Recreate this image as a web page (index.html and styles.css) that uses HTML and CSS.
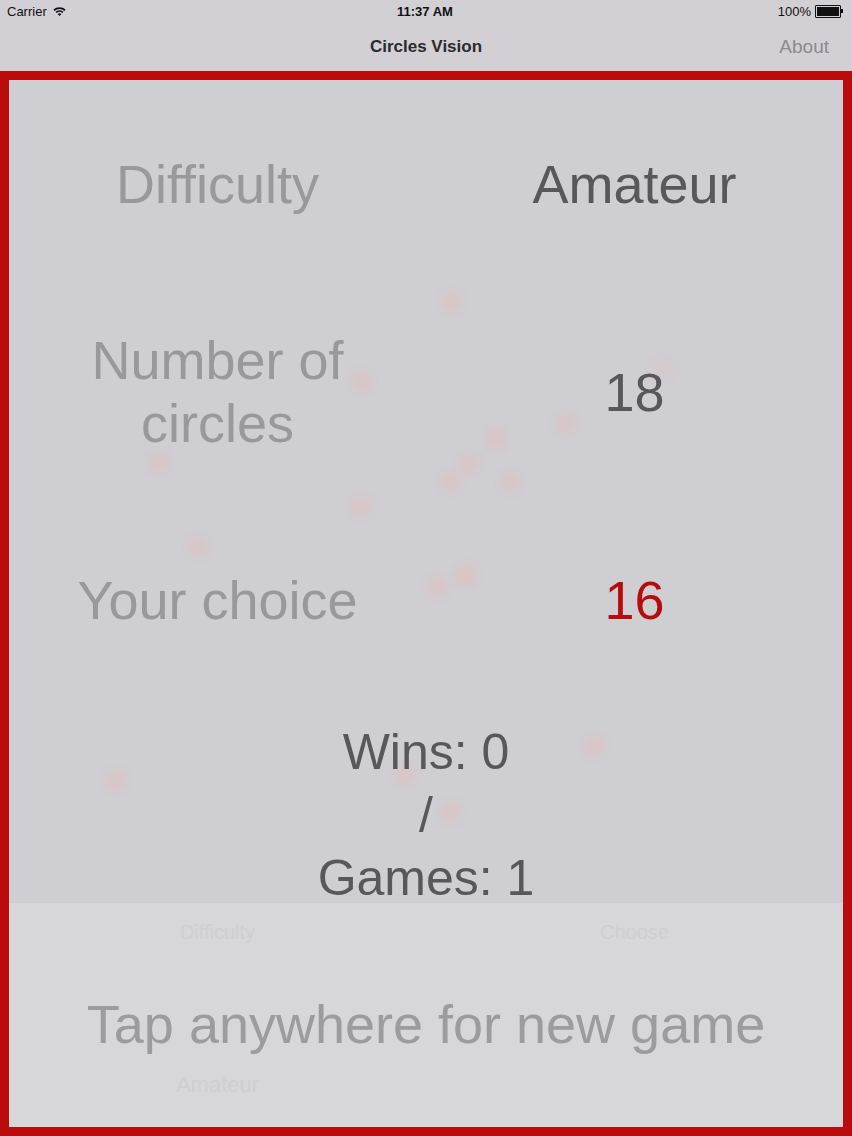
FILE: index.html
```html
<!DOCTYPE html>
<html lang="en">
<head>
<meta charset="utf-8">
<title>Circles Vision</title>
<link rel="stylesheet" href="styles.css">
</head>
<body>
<div class="status">
  <div class="status-left">
    <span>Carrier</span>
    <svg class="wifi" width="13" height="10" viewBox="0 0 13 10">
      <path d="M0.4 3.6 A9 9 0 0 1 12.6 3.6 L11.4 4.9 A7.2 7.2 0 0 0 1.6 4.9 Z" fill="#111"/>
      <path d="M2.5 5.8 A6 6 0 0 1 10.5 5.8 L9.3 7.1 A4.2 4.2 0 0 0 3.7 7.1 Z" fill="#111"/>
      <path d="M4.6 8 A3 3 0 0 1 8.4 8 L6.5 10 Z" fill="#111"/>
    </svg>
  </div>
  <div class="status-time">11:37 AM</div>
  <div class="status-right">
    <span>100%</span>
    <span class="battery"><span class="battery-fill"></span></span>
    <span class="battery-nub"></span>
  </div>
</div>
<div class="navbar">
  <div class="nav-side"></div>
  <div class="nav-title">Circles Vision</div>
  <div class="nav-side nav-action">About</div>
</div>
<div class="board">
  <div class="main">
    <div class="dots">
      <span class="dot" style="left:443px;top:222px"></span>
      <span class="dot" style="left:353px;top:302px"></span>
      <span class="dot" style="left:557px;top:344px"></span>
      <span class="dot" style="left:487px;top:359px"></span>
      <span class="dot" style="left:460px;top:384px"></span>
      <span class="dot" style="left:442px;top:402px"></span>
      <span class="dot" style="left:501px;top:402px"></span>
      <span class="dot" style="left:150px;top:383px"></span>
      <span class="dot" style="left:352px;top:427px"></span>
      <span class="dot" style="left:189px;top:467px"></span>
      <span class="dot" style="left:428px;top:507px"></span>
      <span class="dot" style="left:456px;top:497px"></span>
      <span class="dot" style="left:586px;top:667px"></span>
      <span class="dot" style="left:107px;top:701px"></span>
      <span class="dot" style="left:396px;top:695px"></span>
      <span class="dot" style="left:442px;top:732px"></span>
      <span class="dot faint" style="left:654px;top:290px"></span>
      <span class="dot faint" style="left:458px;top:493px"></span>
    </div>
    <div class="grid">
      <div class="cell label">Difficulty</div>
      <div class="cell value">Amateur</div>
      <div class="cell label">Number of<br>circles</div>
      <div class="cell value">18</div>
      <div class="cell label">Your choice</div>
      <div class="cell value choice">16</div>
    </div>
    <div class="stats">
      <div>Wins: 0</div>
      <div>/</div>
      <div>Games: 1</div>
    </div>
  </div>
  <div class="panel">
    <div class="ghost">
      <div class="ghost-row">
        <span class="ghost-small">Difficulty</span>
        <span class="ghost-small">Choose</span>
      </div>
      <div class="ghost-row ghost-lower">
        <span class="ghost-big">Amateur</span>
        <span class="ghost-big"></span>
      </div>
    </div>
    <div class="tap">Tap anywhere for new game</div>
  </div>
</div>
</body>
</html>
```
FILE: styles.css
```css
html, body {
  margin: 0;
  padding: 0;
}
body {
  width: 852px;
  height: 1136px;
  overflow: hidden;
  background: #d2d0d4;
  font-family: "Liberation Sans", Arial, "Helvetica Neue", sans-serif;
  color: #111;
}
.status {
  height: 22px;
  display: flex;
  align-items: center;
  justify-content: space-between;
  padding: 0 9px 0 7px;
  font-size: 13px;
  position: relative;
}
.status-left {
  display: flex;
  align-items: center;
  gap: 6px;
  width: 120px;
}
.wifi {
  margin-top: -1px;
}
.status-time {
  font-weight: bold;
  font-size: 13px;
}
.status-right {
  display: flex;
  align-items: center;
  justify-content: flex-end;
  width: 120px;
  gap: 3px;
}
.battery {
  display: inline-block;
  width: 22px;
  height: 9px;
  border: 1px solid #111;
  border-radius: 1px;
  padding: 1px;
  box-sizing: content-box;
  margin-left: 1px;
}
.battery-fill {
  display: block;
  width: 100%;
  height: 100%;
  background: #111;
}
.battery-nub {
  display: inline-block;
  width: 2px;
  height: 4px;
  background: #111;
  margin-left: -3px;
}
.navbar {
  height: 49px;
  display: flex;
  align-items: center;
  justify-content: space-between;
  padding: 0 23px 0 23px;
  box-sizing: border-box;
}
.nav-side {
  width: 120px;
}
.nav-title {
  font-size: 17px;
  font-weight: bold;
  color: #2b2a2e;
  margin-top: 1px;
}
.nav-action {
  text-align: right;
  font-size: 19px;
  color: #8b8a8f;
  margin-top: 1px;
}
.board {
  height: 1065px;
  border: 9px solid #ba0c0c;
  box-sizing: border-box;
  display: flex;
  flex-direction: column;
  background: #cfced3;
}
.main {
  height: 823px;
  position: relative;
  flex: none;
}
.dots {
  position: absolute;
  inset: 0;
  pointer-events: none;
}
.dot {
  position: absolute;
  width: 22px;
  height: 22px;
  margin: -11px 0 0 -11px;
  border-radius: 50%;
  background: rgba(236, 184, 176, 0.32);
  filter: blur(3px);
}
.dot.faint {
  background: rgba(236, 192, 184, 0.2);
}
.grid {
  position: relative;
  display: grid;
  grid-template-columns: 1fr 1fr;
  grid-template-rows: 208px 208px 208px;
}
.cell {
  display: flex;
  align-items: center;
  justify-content: center;
  text-align: center;
  font-size: 54px;
  line-height: 63px;
}
.label {
  color: #99989d;
}
.value {
  color: #58575c;
}
.choice {
  color: #b50d0d;
}
.stats {
  position: relative;
  margin-top: 17px;
  text-align: center;
  font-size: 50px;
  line-height: 63px;
  color: #58575c;
}
.panel {
  flex: 1;
  position: relative;
  background: #d7d6d8;
}
.ghost {
  position: absolute;
  inset: 0;
  color: #cfced1;
}
.ghost-row {
  display: grid;
  grid-template-columns: 1fr 1fr;
  text-align: center;
}
.ghost-row:first-child {
  padding-top: 18px;
}
.ghost-lower {
  padding-top: 128px;
}
.ghost-small {
  font-size: 20px;
}
.ghost-big {
  font-size: 22px;
}
.tap {
  position: relative;
  padding-top: 90px;
  text-align: center;
  font-size: 54px;
  line-height: 63px;
  color: #9c9b9f;
}
```
